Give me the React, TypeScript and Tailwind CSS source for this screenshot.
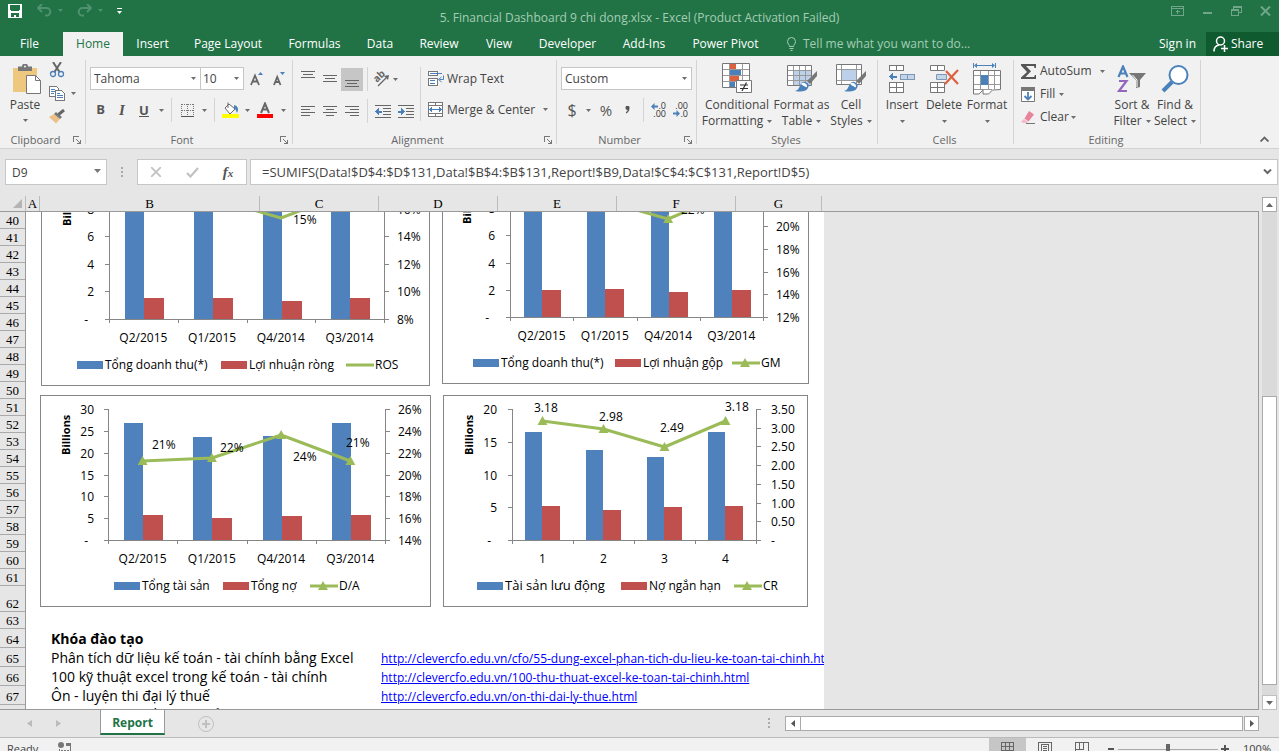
import type { ReactNode } from 'react';

/* ---------- shared bits ---------- */

function Caret({ className = '' }: { className?: string }) {
  return (
    <svg width="5" height="3" viewBox="0 0 5 3" className={`shrink-0 ${className}`} aria-hidden="true">
      <path d="M0 0h5L2.5 3z" fill="#6d6d6d" />
    </svg>
  );
}

function Sep({ className = '' }: { className?: string }) {
  return <span className={`h-6 w-px shrink-0 bg-[#d4d4d4] ${className}`} />;
}

function IconButton({ label, className = 'w-[22px]', children }: { label: string; className?: string; children: ReactNode }) {
  return (
    <button type="button" aria-label={label} className={`flex h-[23px] shrink-0 items-center justify-center ${className}`}>
      {children}
    </button>
  );
}

function Launcher({ label }: { label: string }) {
  return (
    <button type="button" aria-label={label} className="flex size-3 items-center justify-center">
      <svg width="8" height="8" viewBox="0 0 8 8" fill="none" stroke="#777" shapeRendering="crispEdges">
        <path d="M.5 6V.5H6" />
        <path d="M3 3l4 4" shapeRendering="auto" />
        <path d="M7.5 4v3.500H4" />
        <path d="M5 7h3V4z" fill="#777" stroke="none" />
      </svg>
    </button>
  );
}

function Group({ title, className, launcher, children }: { title: string; className: string; launcher?: boolean; children: ReactNode }) {
  return (
    <section aria-label={title} className={`flex shrink-0 pt-1 ${className}`}>
      <div className="flex min-w-0 flex-1 flex-col">
        <div className="flex-1">{children}</div>
        <div className="flex h-4 items-center pr-0.5 text-[11px] leading-4 text-[#666]">
          <span className="flex-1 text-center">{title}</span>
          {launcher && <Launcher label={`${title} settings`} />}
        </div>
      </div>
      <span className="mb-1 w-px bg-[#d4d4d4]" />
    </section>
  );
}

function BigButton({ lines, icon, className = '' }: { lines: [string, string]; icon: ReactNode; className?: string }) {
  return (
    <button type="button" className={`flex shrink-0 flex-col items-center text-[12px] leading-4 text-[#444] ${className}`}>
      <span className="flex h-[37px] items-center">{icon}</span>
      <span className="whitespace-nowrap">{lines[0]}</span>
      <span className="flex h-4 items-center gap-1 whitespace-nowrap">
        {lines[1]}
        <Caret />
      </span>
    </button>
  );
}

/* ---------- title bar and tabs ---------- */

function TitleBar() {
  return (
    <header className="flex h-8 shrink-0 items-center bg-[#217346] text-[#a5cdb4]">
      <div className="flex h-8 flex-1 items-start pl-2">
        <button type="button" aria-label="Save" className="mt-1">
          <svg width="14" height="14" viewBox="0 0 14 14" shapeRendering="crispEdges">
            <path d="M0 0h14v14H0z" fill="#fff" />
            <path d="M2 1h10v6H2zM3 9h8v4H8v-2H6v2H3z" fill="#217346" />
            <path d="M2 6h1v1H2zM11 6h1v1h-1z" fill="#fff" />
          </svg>
        </button>
        <button type="button" aria-label="Undo" className="mt-1 ml-[15px] flex items-center gap-1.5">
          <svg width="15" height="13" viewBox="0 0 15 13" fill="none" stroke="#4f9270" strokeWidth="2">
            <path d="M5 0L1 4l4 4M1 4h8.500a3.800 3.800 0 0 1 0 7.600H8" />
          </svg>
          <svg width="5" height="3"><path d="M0 0h5L2.500 3z" fill="#4f9270" /></svg>
        </button>
        <button type="button" aria-label="Redo" className="mt-1 ml-[14px] flex items-center gap-1.5">
          <svg width="15" height="13" viewBox="0 0 15 13" fill="none" stroke="#4f9270" strokeWidth="2">
            <path d="M10 0l4 4-4 4M14 4H5.500a3.800 3.800 0 0 0 0 7.600H7" />
          </svg>
          <svg width="5" height="3"><path d="M0 0h5L2.500 3z" fill="#4f9270" /></svg>
        </button>
        <button type="button" aria-label="Customize toolbar" className="mt-2 ml-[14px]">
          <svg width="5" height="6" viewBox="0 0 5 6"><path d="M0 0h5v1H0zM0 3h5L2.500 6z" fill="#fff" /></svg>
        </button>
      </div>
      <h1 className="pt-1 text-[12px] leading-4 whitespace-nowrap">5. Financial Dashboard 9 chi dong.xlsx - Excel (Product Activation Failed)</h1>
      <div className="flex flex-1 items-start justify-end gap-[18px] pr-2 pb-[9px]">
        <button type="button" aria-label="Ribbon display options">
          <svg width="13" height="11" viewBox="0 0 13 11" fill="none" stroke="#6fa788" shapeRendering="crispEdges">
            <path d="M.5.500h12v9H.5zM1 2.500h11M6.500 8V4M4.500 5.500h4" />
          </svg>
        </button>
        <button type="button" aria-label="Minimize" className="pt-1.5">
          <svg width="11" height="2"><path d="M1 0h9v2H1z" fill="#6fa788" /></svg>
        </button>
        <button type="button" aria-label="Restore">
          <svg width="11" height="10" viewBox="0 0 11 10" fill="none" stroke="#6fa788" shapeRendering="crispEdges">
            <path d="M.5 3.500h7v6h-7zM.5 4.500h7M2.500 3V.5h8v6H8M3 1.500h7" />
          </svg>
        </button>
        <button type="button" aria-label="Close">
          <svg width="11" height="10" viewBox="0 0 11 10" fill="none" stroke="#6fa788" strokeWidth="2">
            <path d="M1 .5l9 9M10 .5l-9 9" />
          </svg>
        </button>
      </div>
    </header>
  );
}

const tabs = [
  { name: 'Home', width: 'w-[60px]' },
  { name: 'Insert', width: 'w-[59px]' },
  { name: 'Page Layout', width: 'w-[92px]' },
  { name: 'Formulas', width: 'w-[81px]' },
  { name: 'Data', width: 'w-[50px]' },
  { name: 'Review', width: 'w-[68px]' },
  { name: 'View', width: 'w-[52px]' },
  { name: 'Developer', width: 'w-[85px]' },
  { name: 'Add-Ins', width: 'w-[68px]' },
  { name: 'Power Pivot', width: 'w-[95px]' },
];

function TabBar() {
  return (
    <nav className="flex h-6 shrink-0 bg-[#217346] text-[12px] leading-6 text-white">
      <button type="button" className="w-[63px] shrink-0 pr-1">File</button>
      {tabs.map((t) => (
        <button
          key={t.name}
          type="button"
          className={`shrink-0 whitespace-nowrap ${t.width} ${t.name === 'Home' ? 'bg-[#f1f1f1] text-[#217346]' : ''}`}
        >
          {t.name}
        </button>
      ))}
      <button type="button" className="ml-[13px] flex items-center gap-1.5 text-[#a5cdb4]">
        <svg width="11" height="14" viewBox="0 0 11 14" fill="none" stroke="#a5cdb4">
          <path d="M3.500 9.500c0-2-2-2.500-2-5a4 4 0 0 1 8 0c0 2.500-2 3-2 5zM3.500 11.500h4M4.500 13.500h2" />
        </svg>
        Tell me what you want to do...
      </button>
      <div className="flex flex-1 justify-end">
        <button type="button" className="px-2.5">Sign in</button>
        <button type="button" className="flex w-[73px] items-center gap-0.5 bg-[#0f5a2f] pl-[7px]">
          <svg width="16" height="17" viewBox="0 0 16 17" fill="none" stroke="#fff" strokeWidth="1.500">
            <circle cx="7.500" cy="5" r="4" />
            <path d="M1 15.500c0-4 2-6 5-6.500M8 12.500h7M11.500 9v7" />
          </svg>
          Share
        </button>
      </div>
    </nav>
  );
}

/* ---------- ribbon ---------- */

function Clipboard() {
  return (
    <Group title="Clipboard" className="w-[86px]" launcher>
      <div className="flex pl-1.5">
        <button type="button" className="flex w-[38px] flex-col items-center text-[12px] leading-4 text-[#444]">
          <svg width="29" height="32" viewBox="0 0 29 32" className="mt-1 ml-1">
            <path d="M0 4h24v24H0z" fill="#edc87e" />
            <path d="M5 7V2.500h4A3 3 0 0 1 15 2.500h4V7z" fill="#777" />
            <circle cx="12" cy="2.500" r="1" fill="#f1f1f1" />
            <path d="M13.500 11.500h9l5 5v13h-14z" fill="#fff" stroke="#777" />
            <path d="M22.500 11.500v5h5" fill="none" stroke="#777" />
          </svg>
          <span className="mt-px">Paste</span>
          <Caret className="mt-1.5" />
        </button>
        <div className="flex flex-col items-start gap-2 pt-0.5 pl-[5px]">
          <button type="button" aria-label="Cut">
            <svg width="16" height="16" viewBox="0 0 16 16" fill="none">
              <path d="M4 0l6.500 10M12 0L5.500 10" stroke="#666" strokeWidth="2" />
              <circle cx="4" cy="12" r="2.500" stroke="#4b81ba" strokeWidth="1.300" />
              <circle cx="12" cy="12" r="2.500" stroke="#4b81ba" strokeWidth="1.300" />
            </svg>
          </button>
          <button type="button" aria-label="Copy" className="flex items-center gap-1.5">
            <svg width="16" height="15" viewBox="0 0 16 15" shapeRendering="crispEdges">
              <path d="M.5.500h7l2 2v8h-9z" fill="#fff" stroke="#777" />
              <path d="M2 3.500h4M2 5.500h4M2 7.500h3" stroke="#4b81ba" />
              <path d="M6.500 4.500h6l3 3v7h-9z" fill="#fff" stroke="#777" />
              <path d="M8 7.500h3M8 9.500h6M8 11.500h6" stroke="#4b81ba" />
            </svg>
            <Caret />
          </button>
          <button type="button" aria-label="Format Painter">
            <svg width="16" height="15" viewBox="0 0 16 15">
              <path d="M0 8l5-3 6 5-4 4.500z" fill="#edc087" />
              <path d="M5 5l2-2 6 5-2 2z" fill="#777" />
              <path d="M9.500 5.500L15 1" stroke="#666" strokeWidth="3" />
            </svg>
          </button>
        </div>
      </div>
    </Group>
  );
}

function FontGroup() {
  return (
    <Group title="Font" className="w-[207px]" launcher>
      <div className="flex flex-col gap-2 pt-[7px] pl-1">
        <div className="flex items-center text-[12px] text-[#444]">
          <DropDown label="Font name" value="Tahoma" className="w-[111px]" />
          <DropDown label="Font size" value="10" className="-ml-px w-[44px]" tight />
          <IconButton label="Increase font size" className="ml-0.5 w-[22px]">
            <svg width="14" height="14" viewBox="0 0 14 14" fill="none">
              <path d="M1 13L5 3.500 9 13M2.500 9.500h5" stroke="#666" strokeWidth="1.800" />
              <path d="M8 3h5L10.500 0z" fill="#4b81ba" />
            </svg>
          </IconButton>
          <IconButton label="Decrease font size">
            <svg width="13" height="14" viewBox="0 0 13 14" fill="none">
              <path d="M1 13l3.200-8L7.500 13M2.200 10h4" stroke="#666" strokeWidth="1.800" />
              <path d="M7 0h5L9.500 3z" fill="#4b81ba" />
            </svg>
          </IconButton>
        </div>
        <div className="flex items-center text-[#555]">
          <IconButton label="Bold" className="w-[21px] text-[13px] font-bold">B</IconButton>
          <IconButton label="Italic"><span className="font-['Liberation_Serif',serif] text-[15px] font-bold italic">I</span></IconButton>
          <IconButton label="Underline"><span className="border-b border-[#555] text-[13px] leading-3 font-bold">U</span></IconButton>
          <IconButton label="Underline style" className="w-3"><Caret /></IconButton>
          <Sep className="mr-0.5 ml-1" />
          <IconButton label="Borders" className="w-[26px]">
            <svg width="13" height="13" viewBox="0 0 13 13" fill="none" stroke="#777" shapeRendering="crispEdges">
              <path d="M.5.500h12M.5 6.500h12M.5 0v12M6.500 0v12M12.500 0v12" strokeDasharray="1 1" />
              <path d="M0 12.500h13" stroke="#555" />
            </svg>
          </IconButton>
          <IconButton label="Border style" className="w-2"><Caret /></IconButton>
          <Sep className="mr-0.5 ml-1.5" />
          <IconButton label="Fill color" className="w-[26px]">
            <svg width="17" height="16" viewBox="0 0 17 16" fill="none">
              <path d="M3 6l4-4 6 5-5 5z" fill="#fff" stroke="#666" />
              <path d="M6 6V.5" stroke="#666" />
              <path d="M12 3c4 1 5 4 3 8-1-2-1-4-3-5z" fill="#4b81ba" />
              <path d="M0 12h17v4H0z" fill="#ff0" />
            </svg>
          </IconButton>
          <IconButton label="Fill color list" className="w-2"><Caret /></IconButton>
          <IconButton label="Font color" className="w-7">
            <svg width="16" height="16" viewBox="0 0 16 16" fill="none">
              <path d="M4 11L8 1.500 12 11M5.500 7.500h5" stroke="#666" strokeWidth="2" />
              <path d="M0 12h16v4H0z" fill="#f00" />
            </svg>
          </IconButton>
          <IconButton label="Font color list" className="w-2"><Caret /></IconButton>
        </div>
      </div>
    </Group>
  );
}

function DropDown({ label, value, className, tight }: { label: string; value: string; className: string; tight?: boolean }) {
  return (
    <span className={`relative flex h-[23px] shrink-0 ${className}`}>
      <select
        aria-label={label}
        defaultValue={value}
        className={`w-full appearance-none border border-[#c6c6c6] bg-white text-[12px] leading-4 text-[#444] ${tight ? 'pl-0.5' : 'pl-[3px]'}`}
      >
        <option>{value}</option>
      </select>
      <Caret className="pointer-events-none absolute top-2.5 right-[5px]" />
    </span>
  );
}

function Lines({ d, width = 14, height = 13 }: { d: string; width?: number; height?: number }) {
  return (
    <svg width={width} height={height} viewBox={`0 0 ${width} ${height}`} fill="none" stroke="#666" shapeRendering="crispEdges">
      <path d={d} />
    </svg>
  );
}

function Alignment() {
  return (
    <Group title="Alignment" className="w-[264px]" launcher>
      <div className="flex pt-[7px] pl-1 text-[12px] leading-4 text-[#444]">
        <div className="flex flex-col gap-2">
          <div className="flex items-center">
            <IconButton label="Top align"><Lines height={17} d="M0 .5h14M2 3.500h10M0 6.500h14" /></IconButton>
            <IconButton label="Middle align"><Lines d="M0 2.500h14M2 5.500h10M0 8.500h14" /></IconButton>
            <IconButton label="Bottom align" className="w-[22px] bg-[#c6c6c6]"><Lines height={15} d="M0 8.500h14M2 11.500h10M0 14.500h14" /></IconButton>
            <Sep className="ml-1" />
            <IconButton label="Orientation" className="w-[34px] gap-1">
              <svg width="17" height="16" viewBox="0 0 17 16" fill="none" overflow="visible">
                <text fontSize="10" fontWeight="700" fill="#666" transform="translate(5 12) rotate(-45)">ab</text>
                <path d="M6 15L14 7" stroke="#666" strokeWidth="1.200" />
                <path d="M17 4l-1 5-4-4z" fill="#666" />
              </svg>
              <Caret />
            </IconButton>
          </div>
          <div className="flex items-center">
            <IconButton label="Align left"><Lines height={11} d="M0 .5h14M0 3.500h9M0 6.500h14M0 9.500h9" /></IconButton>
            <IconButton label="Center"><Lines height={11} d="M0 .5h14M3 3.500h8M0 6.500h14M3 9.500h8" /></IconButton>
            <IconButton label="Align right"><Lines height={11} d="M0 .5h14M5 3.500h9M0 6.500h14M5 9.500h9" /></IconButton>
            <Sep className="ml-1" />
            <IconButton label="Decrease indent" className="w-[30px]">
              <svg width="16" height="13" viewBox="0 0 16 13" fill="none" shapeRendering="crispEdges">
                <path d="M0 .5h16M8 3.500h8M8 6.500h8M8 9.500h8M0 12.500h16" stroke="#666" />
                <path d="M0 6.500L4 3v2.500h3v2H4V10z" fill="#4b81ba" />
              </svg>
            </IconButton>
            <IconButton label="Increase indent" className="w-4">
              <svg width="16" height="13" viewBox="0 0 16 13" fill="none" shapeRendering="crispEdges">
                <path d="M0 .5h16M8 3.500h8M8 6.500h8M8 9.500h8M0 12.500h16" stroke="#666" />
                <path d="M7 6.500L3 3v2.500H0v2h3V10z" fill="#4b81ba" />
              </svg>
            </IconButton>
          </div>
        </div>
        <span className="ml-1.5 h-[54px] w-px shrink-0 bg-[#d4d4d4]" />
        <div className="flex flex-col gap-2 pl-[7px]">
          <button type="button" className="flex h-[23px] items-center gap-[3px] whitespace-nowrap">
            <svg width="16" height="16" viewBox="0 0 16 16" fill="none" shapeRendering="crispEdges">
              <path d="M.5.500h9v4h-9zM.5 7.500h9v7h-9z" fill="#fff" stroke="#777" />
              <path d="M2 2.500h12M2 9.500h5M2 12.500h5" stroke="#4b81ba" />
              <path d="M15.500 4.500v4h-4M13.500 6l-3 2.500 3 2.500" stroke="#4b81ba" shapeRendering="auto" />
            </svg>
            Wrap Text
          </button>
          <button type="button" className="flex h-[23px] items-center gap-1 whitespace-nowrap">
            <svg width="15" height="15" viewBox="0 0 15 15" fill="none" shapeRendering="crispEdges">
              <path d="M.5.500h14v14H.5z" fill="#fff" stroke="#777" />
              <path d="M0 3.500h15M0 11.500h15M7.500 0v3M7.500 12v3" stroke="#777" />
              <path d="M2 7.500h11" stroke="#4b81ba" />
              <path d="M1 7.500L4 5v5zM14 7.500L11 5v5z" fill="#4b81ba" />
            </svg>
            Merge &amp; Center
            <Caret className="ml-1" />
          </button>
        </div>
      </div>
    </Group>
  );
}

function NumberGroup() {
  return (
    <Group title="Number" className="w-[140px]" launcher>
      <div className="flex flex-col gap-2 pt-[7px] pl-1">
        <DropDown label="Number format" value="Custom" className="w-[131px]" />
        <div className="flex items-center text-[16px] leading-5 text-[#555]">
          <IconButton label="Accounting format">$</IconButton>
          <IconButton label="Accounting format list" className="w-2.5"><Caret /></IconButton>
          <IconButton label="Percent style" className="w-[26px] text-[15px]">%</IconButton>
          <IconButton label="Comma style" className="w-4">
            <svg width="5" height="8" viewBox="0 0 5 8"><path d="M.5 1.500a2 2 0 0 1 4 .5c0 3-1.500 4.500-3.500 5.500V6C2 5.500 2.500 5 2.500 4 1 4 .5 3 .5 1.500z" fill="#555" /></svg>
          </IconButton>
          <Sep className="ml-2" />
          <IconButton label="Increase decimal" className="w-7">
            <svg width="15" height="16" viewBox="0 0 15 16" overflow="visible">
              <text x="15" y="7" fontSize="9" textAnchor="end" fill="#333">.0</text>
              <text x="15" y="15" fontSize="9" textAnchor="end" fill="#333">.00</text>
              <path d="M0 4.500L3.500 1v2.500H7v2H3.500V8z" fill="#4b81ba" />
            </svg>
          </IconButton>
          <IconButton label="Decrease decimal" className="w-4">
            <svg width="15" height="16" viewBox="0 0 15 16" overflow="visible">
              <text x="15" y="7" fontSize="9" textAnchor="end" fill="#333">.00</text>
              <text x="15" y="15" fontSize="9" textAnchor="end" fill="#333">.0</text>
              <path d="M7 11.500L3.500 8v2.500H0v2h3.500V15z" fill="#4b81ba" />
            </svg>
          </IconButton>
        </div>
      </div>
    </Group>
  );
}

function Brush() {
  return (
    <>
      <path d="M30 7L20 17l3 3 7-8z" fill="#777" />
      <path d="M8 27c4-1 4-4 6-7a4 4 0 0 1 7 4c-2 4-8 4-13 3z" fill="#4b81ba" />
      <path d="M14 20a3.500 3.500 0 0 1 6 3c-1 1-2-1-3-1s-1-1-3-2z" fill="#fff" />
    </>
  );
}

function Styles() {
  return (
    <Group title="Styles" className="w-[181px]">
      <div className="flex justify-between pr-[5px] pl-1">
        <BigButton
          lines={['Conditional', 'Formatting']}
          className="w-[72px]"
          icon={
            <svg width="30" height="31" viewBox="0 0 30 31">
              <path d="M.5.500h27v24H.5z" fill="#fff" stroke="#777" />
              <path d="M8 1h6v5H8zM8 13h9v5H8z" fill="#dc6141" />
              <path d="M8 7h11v5H8zM8 19h5v5H8z" fill="#4b81ba" />
              <path d="M1 6.500h26M1 12.500h26M1 18.500h26M7.500 1v23M20.500 1v23" stroke="#999" fill="none" />
              <path d="M14.500 17.500h15v12h-15z" fill="#fff" stroke="#777" />
              <path d="M18 22h8M18 25.500h8M24.500 19.500l-4.500 8.500" stroke="#333" strokeWidth="1.200" />
            </svg>
          }
        />
        <BigButton
          lines={['Format as', 'Table']}
          className="w-[56px]"
          icon={
            <svg width="30" height="29" viewBox="0 0 30 29">
              <path d="M.5 1.500h24v20H.5z" fill="#fff" stroke="#777" />
              <path d="M7 7h17v14H7z" fill="#bdd0ea" />
              <path d="M1 6.500h23M1 11.500h23M1 16.500h23M6.500 2v19M12.500 2v19M18.500 2v19" stroke="#999" fill="none" />
              <Brush />
            </svg>
          }
        />
        <BigButton
          lines={['Cell', 'Styles']}
          className="w-[42px]"
          icon={
            <svg width="30" height="29" viewBox="0 0 30 29">
              <path d="M.5.500h25v20H.5z" fill="#fff" stroke="#777" />
              <path d="M6 6h14v10H6z" fill="#bdd0ea" />
              <path d="M1 5.500h24M1 16.500h24M5.500 1v19M20.500 1v19" stroke="#999" fill="none" />
              <Brush />
            </svg>
          }
        />
      </div>
    </Group>
  );
}

function CellGrid({ y }: { y: number }) {
  return <path d={`M.5 ${y + 0.5}h14v${y ? 10 : 5}H.5zM7.500 ${y}v${y ? 10 : 5}${y ? 'M1 22.500h14' : ''}`} fill="#fff" stroke="#777" />;
}

function Cells() {
  return (
    <Group title="Cells" className="w-[136px]">
      <div className="flex pl-[3px]">
        <BigButton
          lines={['Insert', '']}
          className="w-[42px]"
          icon={
            <svg width="27" height="28" viewBox="0 0 27 28" shapeRendering="crispEdges">
              <CellGrid y={0} />
              <CellGrid y={17} />
              <path d="M11.500 9.500h14v5h-14zM18.500 9v6" fill="#c3d5e8" stroke="#7d97b5" />
              <path d="M0 11.500L4 8v2.500h4v2H4V15z" fill="#4b81ba" />
            </svg>
          }
        />
        <BigButton
          lines={['Delete', '']}
          className="w-[42px]"
          icon={
            <svg width="29" height="28" viewBox="0 0 29 28">
              <CellGrid y={0} />
              <CellGrid y={17} />
              <path d="M6.500 9.500h10v5h-10z" fill="#c3d5e8" stroke="#7d97b5" />
              <path d="M16 6l12 13M28 5L15 19" stroke="#dc6141" strokeWidth="2.200" />
            </svg>
          }
        />
        <BigButton
          lines={['Format', '']}
          className="w-[44px]"
          icon={
            <svg width="28" height="32" viewBox="0 0 28 32" fill="none">
              <path d="M.5 0v5M22.500 0v5M2 2.500h19" stroke="#4b81ba" />
              <path d="M1 2.500L4 0v5zM22 2.500L19 0v5z" fill="#4b81ba" />
              <path d="M.5 7.500h27v19l-8 .5-4 4H10v-4l-4 4H.5z" fill="#fff" stroke="#777" />
              <path d="M1 12.500h26M1 21.500h26M1 26.500h18M7.500 8v18M15.500 8v18M21.500 8v18" stroke="#999" />
              <path d="M8 12h7v10H8z" fill="#4b81ba" />
            </svg>
          }
        />
      </div>
    </Group>
  );
}

function Editing() {
  return (
    <Group title="Editing" className="w-[187px]">
      <div className="flex pl-[7px]">
        <div className="flex w-[84px] flex-col text-[12px] leading-4 text-[#444]">
          <button type="button" className="flex h-[22px] items-center">
            <svg width="16" height="15" viewBox="0 0 16 15" className="mr-[3px]">
              <path d="M0 0h15v4h-1.500L13 2H5l5 5.300L4.500 13H13l1-2h1v4H0v-1.500L6 8 0 1.500z" fill="#555" />
            </svg>
            <span className="flex-1 text-left">AutoSum</span>
            <Caret />
          </button>
          <button type="button" className="flex h-6 items-center gap-1">
            <svg width="14" height="15" viewBox="0 0 14 15" fill="none">
              <path d="M.5.500h13v14H.5z" fill="#fff" stroke="#777" />
              <path d="M0 0h14v4H0z" fill="#777" />
              <path d="M7 5v8M3.500 9L7 12.500 10.500 9" stroke="#4b81ba" strokeWidth="1.800" />
            </svg>
            <span className="ml-px">Fill</span>
            <Caret />
          </button>
          <button type="button" className="flex h-[22px] items-center gap-1">
            <svg width="14" height="13" viewBox="0 0 14 13">
              <path d="M8 0l5 3.500-5.500 7-4-3z" fill="#e9839b" />
              <path d="M3 8l4 3-1 1H2L0 10.500z" fill="#f4bcc8" />
              <path d="M5 12.500h9" stroke="#777" />
            </svg>
            <span className="ml-px">Clear</span>
            <Caret className="-ml-0.5" />
          </button>
        </div>
        <BigButton
          lines={['Sort &', 'Filter']}
          className="ml-1.5 w-[42px]"
          icon={
            <svg width="30" height="28" viewBox="0 0 30 28" fill="none">
              <path d="M1.500 12L6 1.500 10.500 12M3 8.500h6" stroke="#4b81ba" strokeWidth="2.200" />
              <path d="M2 16h7.500L2 26h8" stroke="#9467bd" strokeWidth="2.200" />
              <path d="M12 8h17l-6 7v7l-4 1v-8z" fill="#777" />
              <path d="M15.500 10l4.500 5v7" stroke="#fff" />
            </svg>
          }
        />
        <BigButton
          lines={['Find &', 'Select']}
          className="w-[44px]"
          icon={
            <svg width="28" height="28" viewBox="0 0 28 28" fill="none">
              <circle cx="17.500" cy="10" r="9" fill="#fff" stroke="#4b81ba" strokeWidth="2" />
              <path d="M11 17l-9 9" stroke="#4b81ba" strokeWidth="4" />
            </svg>
          }
        />
      </div>
    </Group>
  );
}

function Ribbon() {
  return (
    <div className="flex h-[93px] shrink-0 border-b border-[#d2d2d2] bg-[#f1f1f1]">
      <Clipboard />
      <FontGroup />
      <Alignment />
      <NumberGroup />
      <Styles />
      <Cells />
      <Editing />
      <div className="flex flex-1 items-end justify-end pr-2.5 pb-1.5">
        <button type="button" aria-label="Collapse ribbon">
          <svg width="9" height="6" viewBox="0 0 9 6" fill="none" stroke="#666" strokeWidth="1.800"><path d="M.5 5.500l4-4 4 4" /></svg>
        </button>
      </div>
    </div>
  );
}

/* ---------- formula bar ---------- */

function Dots() {
  return (
    <svg width="2" height="11" viewBox="0 0 2 11" className="shrink-0"><path d="M0 0h2v2H0zM0 4h2v2H0zM0 8h2v2H0z" fill="#aaa" /></svg>
  );
}

function FormulaBar() {
  return (
    <div className="flex h-[47px] shrink-0 items-start bg-[#e6e6e6] pt-2.5 pr-px pl-[5px]">
      <div className="relative flex h-[26px] w-[102px] shrink-0">
        <input aria-label="Name box" defaultValue="D9" className="w-full border border-[#c6c6c6] bg-white pt-0.5 pl-1.5 text-[12px] text-[#444]" />
        <svg width="7" height="4" className="absolute top-2.5 right-1.5"><path d="M0 0h7L3.500 4z" fill="#777" /></svg>
      </div>
      <div className="flex h-[26px] w-[30px] shrink-0 items-center justify-center"><Dots /></div>
      <div className="flex h-[26px] w-[110px] shrink-0 items-center border border-[#c6c6c6] bg-white">
        <button type="button" aria-label="Cancel" className="flex w-9 justify-center">
          <svg width="10" height="10" viewBox="0 0 10 10" fill="none" stroke="#c2c2c2" strokeWidth="1.800"><path d="M0 0l10 10M10 0L0 10" /></svg>
        </button>
        <button type="button" aria-label="Enter" className="flex w-9 justify-center">
          <svg width="13" height="11" viewBox="0 0 13 11" fill="none" stroke="#c2c2c2" strokeWidth="2.200"><path d="M1 6l3.500 3.500L12 1" /></svg>
        </button>
        <button type="button" aria-label="Insert function" className="w-9 font-['Liberation_Serif',serif] text-[15px] leading-4 font-bold text-[#555] italic">
          f<span className="text-[11px]">x</span>
        </button>
      </div>
      <div className="relative ml-[3px] flex h-[26px] min-w-0 flex-1">
        <input
          aria-label="Formula"
          defaultValue="=SUMIFS(Data!$D$4:$D$131,Data!$B$4:$B$131,Report!$B9,Data!$C$4:$C$131,Report!D$5)"
          className="w-full border border-[#c6c6c6] bg-white pt-0.5 pl-[11px] text-[13px] text-[#444]"
        />
        <svg width="9" height="6" viewBox="0 0 9 6" fill="none" stroke="#666" strokeWidth="2" className="absolute top-2.5 right-1.5"><path d="M1 .5l3.500 3.500L8 .5" /></svg>
      </div>
    </div>
  );
}

/* ---------- charts ---------- */

const BLUE = '#4f81bd';
const RED = '#c0504d';
const GREEN = '#9bbb59';

type Legend = { x: number; text: string; kind: 'blue' | 'red' | 'line' | 'marker'; size?: number };

type ChartProps = {
  label: string;
  width: number;
  height: number;
  left: number;
  right: number;
  top: number;
  base: number;
  leftTicks: string[];
  rightTicks: string[];
  leftLabelX: number;
  rightLabelX: number;
  titleX: number;
  titleY: number;
  categories: string[];
  barOffset: number;
  barWidth: number;
  blue: number[];
  red: number[];
  line: number[];
  markers?: boolean;
  labels: { x: number; y: number; text: string }[];
  categoryY: number;
  legendY: number;
  legend: Legend[];
};

function Marker({ x, y }: { x: number; y: number }) {
  return <path d={`M${x - 5} ${y + 4}L${x} ${y - 5}L${x + 5} ${y + 4}Z`} fill={GREEN} />;
}

function Chart(p: ChartProps) {
  const step = (p.right - p.left) / p.categories.length;
  const ly = (i: number) => p.base - ((p.base - p.top) * i) / (p.leftTicks.length - 1);
  const ry = (i: number) => p.base - ((p.base - p.top) * i) / (p.rightTicks.length - 1);
  const cx = (i: number) => p.left + step * (i + 0.5);
  return (
    <svg
      role="img"
      aria-label={p.label}
      width={p.width}
      height={p.height}
      viewBox={`0 0 ${p.width} ${p.height}`}
      className="shrink-0 bg-white"
      fontSize="12"
      fill="#000"
    >
      <rect x=".5" y=".5" width={p.width - 1} height={p.height - 1} fill="none" stroke="#868686" />
      <text x={p.titleX} y={p.titleY} fontSize="11" fontWeight="700" transform={`rotate(-90 ${p.titleX} ${p.titleY})`}>Billions</text>
      {p.categories.map((c, i) => (
        <g key={c}>
          <rect x={Math.round(p.left + step * i + p.barOffset)} y={p.base - p.blue[i]} width={p.barWidth} height={p.blue[i]} fill={BLUE} />
          <rect x={Math.round(p.left + step * i + p.barOffset) + p.barWidth} y={p.base - p.red[i]} width={p.barWidth + 1} height={p.red[i]} fill={RED} />
          <text x={cx(i)} y={p.categoryY} textAnchor="middle">{c}</text>
        </g>
      ))}
      <g fill="none" stroke="#868686" shapeRendering="crispEdges">
        <path d={`M${p.left + 0.5} ${p.top}V${p.base}M${p.left - 4} ${p.base + 0.5}H${p.right + 5}M${p.right + 0.5} ${p.top}V${p.base}`} />
        {p.leftTicks.map((_, i) => <path key={i} d={`M${p.left - 4} ${Math.round(ly(i)) + 0.5}h4`} />)}
        {p.rightTicks.map((_, i) => <path key={i} d={`M${p.right + 1} ${Math.round(ry(i)) + 0.5}h4`} />)}
        {[0, 1, 2, 3, 4].map((i) => <path key={i} d={`M${Math.round(p.left + step * i) + 0.5} ${p.base}v4`} />)}
      </g>
      {p.leftTicks.map((t, i) => <text key={i} x={t === '-' ? p.leftLabelX - 6 : p.leftLabelX} y={ly(i) + 5} textAnchor="end">{t}</text>)}
      {p.rightTicks.map((t, i) => <text key={i} x={p.rightLabelX} y={ry(i) + 5}>{t}</text>)}
      <path d={`M${p.line.map((y, i) => `${cx(i)} ${y}`).join('L')}`} fill="none" stroke={GREEN} strokeWidth="3" strokeLinejoin="round" />
      {p.markers && p.line.map((y, i) => <Marker key={i} x={cx(i)} y={y} />)}
      {p.labels.map((l, i) => <text key={i} x={l.x} y={l.y}>{l.text}</text>)}
      {p.legend.map((l) => (
        <g key={l.text}>
          {(l.kind === 'blue' || l.kind === 'red') && <rect x={l.x} y={p.legendY - 4} width="26" height="8" fill={l.kind === 'blue' ? BLUE : RED} />}
          {(l.kind === 'line' || l.kind === 'marker') && <path d={`M${l.x} ${p.legendY}h28`} stroke={GREEN} strokeWidth="3" />}
          {l.kind === 'marker' && <Marker x={l.x + 13} y={p.legendY} />}
          <text x={l.x + (l.kind === 'blue' || l.kind === 'red' ? 28 : 29)} y={p.legendY + 4} fontSize={l.size ?? 12}>{l.text}</text>
        </g>
      ))}
    </svg>
  );
}

const quarters = ['Q2/2015', 'Q1/2015', 'Q4/2014', 'Q3/2014'];

function Charts() {
  return (
    <div className="flex flex-col gap-[9px] pl-3.5">
      <div className="-mt-[38px] flex items-start gap-3 pl-px">
        <Chart
          label="Revenue, net profit and ROS" width={389} height={212}
          left={68} right={343} top={7} base={145}
          leftTicks={['-', '2', '4', '6', '8', '10']} rightTicks={['8%', '10%', '12%', '14%', '16%', '18%']}
          leftLabelX={53} rightLabelX={356} titleX={30} titleY={52}
          categories={quarters} barOffset={16} barWidth={19}
          blue={[134, 132, 130, 136]} red={[21, 21, 18, 21]} line={[21, 24, 44, 18]}
          labels={[{ x: 252, y: 50, text: '15%' }]} categoryY={168} legendY={191}
          legend={[{ x: 36, text: 'Tổng doanh thu(*)', kind: 'blue' }, { x: 180, text: 'Lợi nhuận ròng', kind: 'red' }, { x: 305, text: 'ROS', kind: 'line' }]}
        />
        <Chart
          label="Revenue, gross profit and GM" width={367} height={210}
          left={68} right={321} top={7} base={143}
          leftTicks={['-', '2', '4', '6', '8', '10']} rightTicks={['12%', '14%', '16%', '18%', '20%', '22%', '24%']}
          leftLabelX={53} rightLabelX={334} titleX={29} titleY={50}
          categories={quarters} barOffset={14} barWidth={18}
          blue={[134, 132, 130, 136]} red={[27, 28, 25, 27]} line={[24, 27, 45, 18]} markers
          labels={[{ x: 239, y: 40, text: '22%' }]} categoryY={166} legendY={189}
          legend={[{ x: 31, text: 'Tổng doanh thu(*)', kind: 'blue' }, { x: 173, text: 'Lợi nhuận gộp', kind: 'red' }, { x: 290, text: 'GM', kind: 'marker' }]}
        />
      </div>
      <div className="flex items-start gap-3">
        <Chart
          label="Assets, debt and D/A" width={391} height={212}
          left={68} right={345} top={14} base={145}
          leftTicks={['-', '5', '10', '15', '20', '25', '30']} rightTicks={['14%', '16%', '18%', '20%', '22%', '24%', '26%']}
          leftLabelX={54} rightLabelX={358} titleX={30} titleY={60}
          categories={quarters} barOffset={16} barWidth={19}
          blue={[117, 103, 104, 117]} red={[25, 22, 24, 25]} line={[66, 63, 40, 66]} markers
          labels={[{ x: 112, y: 54, text: '21%' }, { x: 180, y: 57, text: '22%' }, { x: 253, y: 66, text: '24%' }, { x: 306, y: 52, text: '21%' }]}
          categoryY={168} legendY={191}
          legend={[{ x: 74, text: 'Tổng tài sản', kind: 'blue' }, { x: 183, text: 'Tổng nợ', kind: 'red' }, { x: 270, text: 'D/A', kind: 'marker' }]}
        />
        <Chart
          label="Current assets, short-term debt and CR" width={365} height={212}
          left={69} right={313} top={14} base={145}
          leftTicks={['-', '5', '10', '15', '20']} rightTicks={['-', '0.50', '1.00', '1.50', '2.00', '2.50', '3.00', '3.50']}
          leftLabelX={54} rightLabelX={328} titleX={30} titleY={60}
          categories={['1', '2', '3', '4']} barOffset={13} barWidth={17}
          blue={[108, 90, 83, 108]} red={[34, 30, 33, 34]} line={[26, 34, 52, 26]} markers
          labels={[{ x: 91, y: 17, text: '3.18' }, { x: 156, y: 26, text: '2.98' }, { x: 217, y: 37, text: '2.49' }, { x: 282, y: 16, text: '3.18' }]}
          categoryY={168} legendY={191}
          legend={[{ x: 34, text: 'Tài sản lưu động', kind: 'blue', size: 13 }, { x: 178, text: 'Nợ ngắn hạn', kind: 'red' }, { x: 291, text: 'CR', kind: 'marker' }]}
        />
      </div>
    </div>
  );
}

/* ---------- sheet ---------- */

const columns = [
  { name: 'A', width: 'w-[14px]' },
  { name: 'B', width: 'w-[220px]' },
  { name: 'C', width: 'w-[119px]' },
  { name: 'D', width: 'w-[119px]' },
  { name: 'E', width: 'w-[119px]' },
  { name: 'F', width: 'w-[119px]' },
  { name: 'G', width: 'w-[86px]' },
];

const rowHeight = (n: number) => (n === 62 ? 'h-[26px]' : n >= 64 ? 'h-[19px]' : 'h-[17px]');
const rowNumbers = Array.from({ length: 29 }, (_, i) => 40 + i);

const courses = [
  { name: 'Phân tích dữ liệu kế toán - tài chính bằng Excel', link: 'http://clevercfo.edu.vn/cfo/55-dung-excel-phan-tich-du-lieu-ke-toan-tai-chinh.html' },
  { name: '100 kỹ thuật excel trong kế toán - tài chính', link: 'http://clevercfo.edu.vn/100-thu-thuat-excel-ke-toan-tai-chinh.html' },
  { name: 'Ôn - luyện thi đại lý thuế', link: 'http://clevercfo.edu.vn/on-thi-dai-ly-thue.html' },
  { name: 'Khóa đào tạo kế toán trưởng cho thực hành', link: '' },
];

function Sheet() {
  return (
    <div className="flex min-w-0 flex-1 flex-col overflow-hidden border-b border-[#999]">
      <div className="flex h-4 shrink-0 border-b border-[#999] bg-[#e6e6e6] font-['Liberation_Serif',serif] text-[13px] leading-4 text-black">
        <div className="flex w-[26px] shrink-0 items-end justify-end border-r border-[#bbb] pr-[3px] pb-[3px]">
          <svg width="9" height="9"><path d="M9 0v9H0z" fill="#b4b4b4" /></svg>
        </div>
        {columns.map((c) => (
          <div key={c.name} className={`flex shrink-0 justify-center border-r border-[#bbb] ${c.width}`}>{c.name}</div>
        ))}
      </div>
      <div className="flex min-h-0 flex-1 overflow-hidden border-r border-[#999]">
        <div className="flex w-[26px] shrink-0 flex-col border-r border-[#999] bg-[#e6e6e6] font-['Liberation_Serif',serif] text-[13px] leading-[14px] text-black">
          {rowNumbers.map((n) => (
            <div key={n} className={`flex shrink-0 items-end justify-center border-b border-[#aaa] ${rowHeight(n)}`}>{n}</div>
          ))}
        </div>
        <div className="w-[798px] shrink-0 overflow-hidden bg-white">
          <Charts />
          <div className="pt-[22px] pl-[25px] text-black">
            <h2 className="h-[19px] text-[14px] leading-[19px] font-bold">Khóa đào tạo</h2>
            {courses.map((c) => (
              <div key={c.name} className="flex h-[19px] items-center">
                <span className="w-[330px] shrink-0 text-[14px] leading-[19px] whitespace-nowrap">{c.name}</span>
                {c.link && <a href={c.link} className="flex-1 overflow-hidden pt-0.5 text-[12px] leading-5 whitespace-nowrap text-[#0000ff] underline">{c.link}</a>}
              </div>
            ))}
          </div>
        </div>
      </div>
    </div>
  );
}

function VerticalScroll() {
  return (
    <div className="flex w-5 shrink-0 flex-col items-end bg-[#e6e6e6] pr-0.5 pt-px">
      <button type="button" aria-label="Scroll up" className="flex size-[15px] shrink-0 items-center justify-center border border-[#aaa] bg-white">
        <svg width="7" height="4"><path d="M0 4h7L3.500 0z" fill="#666" /></svg>
      </button>
      <div className="flex w-[15px] flex-1 flex-col bg-[#dadada]">
        <div className="flex-[185]" />
        <div className="flex-[289] border border-[#aaa] bg-white" />
        <div className="flex-[10]" />
      </div>
      <button type="button" aria-label="Scroll down" className="flex size-[15px] shrink-0 items-center justify-center border border-[#c0c0c0] bg-white">
        <svg width="7" height="4"><path d="M0 0h7L3.500 4z" fill="#666" /></svg>
      </button>
    </div>
  );
}

function SheetTabs() {
  return (
    <div className="flex h-[27px] shrink-0 items-center bg-[#e6e6e6]">
      <button type="button" aria-label="Previous sheet" className="ml-[27px]"><svg width="5" height="7"><path d="M5 0v7L0 3.500z" fill="#bbb" /></svg></button>
      <button type="button" aria-label="Next sheet" className="ml-6"><svg width="5" height="7"><path d="M0 0v7l5-3.500z" fill="#bbb" /></svg></button>
      <button type="button" className="ml-[39px] h-[25px] w-[65px] self-start border-x border-b-2 border-x-[#999] border-b-[#217346] bg-white pt-0.5 text-[12px] leading-5 font-bold text-[#217346]">Report</button>
      <button type="button" aria-label="New sheet" className="ml-[33px]">
        <svg width="16" height="16" viewBox="0 0 16 16" fill="none" stroke="#c0c0c0"><circle cx="8" cy="8" r="7.500" /><path d="M8 4v8M4 8h8" strokeWidth="2" /></svg>
      </button>
      <div className="flex flex-1 justify-end pr-[15px]"><Dots /></div>
      <div className="mr-5 flex h-[15px] w-[474px] shrink-0">
        <button type="button" aria-label="Scroll left" className="flex w-4 items-center justify-center border border-[#aaa] bg-white"><svg width="4" height="7"><path d="M4 0v7L0 3.500z" fill="#555" /></svg></button>
        <div className="-ml-px flex-1 border border-[#aaa] bg-white" />
        <button type="button" aria-label="Scroll right" className="ml-px flex w-[15px] items-center justify-center border border-[#aaa] bg-white"><svg width="4" height="7"><path d="M0 0v7l4-3.500z" fill="#555" /></svg></button>
      </div>
    </div>
  );
}

function StatusBar() {
  return (
    <footer className="h-3.5 shrink-0 overflow-hidden border-t border-[#bbb] bg-[#f1f1f1] text-[11px] leading-[22px] text-[#444]">
      <div className="flex h-[22px] items-center">
        <span className="w-[58px] shrink-0 pl-[7px]">Ready</span>
        <svg width="13" height="14" viewBox="0 0 13 14" fill="none" stroke="#777" shapeRendering="crispEdges">
          <path d="M1.500 7v6.500h11V1.500H8" /><path d="M8 2.500h5M8 3.500h5" /><path d="M3 8.500h9M3 10.500h9" strokeDasharray="2 1" />
          <circle cx="3" cy="3" r="3" fill="#777" stroke="none" shapeRendering="auto" />
        </svg>
        <div className="flex-1" />
        <button type="button" aria-label="Normal view" className="flex h-[22px] w-[37px] items-center justify-center bg-[#c6c6c6]">
          <svg width="13" height="14" viewBox="0 0 13 14" fill="none" stroke="#666" shapeRendering="crispEdges"><path d="M.5.500h12v12H.5zM0 4.500h13M0 8.500h13M4.500 0v13M8.500 0v13" /></svg>
        </button>
        <button type="button" aria-label="Page layout view" className="flex h-[22px] w-[37px] items-center justify-center">
          <svg width="14" height="14" viewBox="0 0 14 14" fill="none" stroke="#666" shapeRendering="crispEdges"><path d="M.5.500h13v13H.5zM3.500 2.500h7v11h-7zM5 4.500h4M5 6.500h4M5 8.500h4" /></svg>
        </button>
        <button type="button" aria-label="Page break view" className="flex h-[22px] w-[37px] items-center justify-center">
          <svg width="14" height="14" viewBox="0 0 14 14" fill="none" stroke="#666" shapeRendering="crispEdges"><path d="M.5.500h13v13H.5zM.5 7.500h8M4.500 0v7M8.500 0v7" /></svg>
        </button>
        <button type="button" aria-label="Zoom out" className="ml-2"><svg width="6" height="2"><path d="M0 0h6v2H0z" fill="#555" /></svg></button>
        <div className="mr-[3px] ml-1 flex h-[10px] w-[100px] items-center justify-center bg-[linear-gradient(#aaa,#aaa)] bg-[length:100%_1px] bg-center bg-no-repeat">
          <span className="h-[10px] w-1 bg-[#666]" />
        </div>
        <button type="button" aria-label="Zoom in"><svg width="8" height="8"><path d="M3 0h2v8H3zM0 3h8v2H0z" fill="#555" /></svg></button>
        <span className="ml-3.5 pr-2">100%</span>
      </div>
    </footer>
  );
}

export default function App() {
  return (
    <div className="flex h-screen min-w-0 flex-col overflow-hidden bg-[#e6e6e6] font-['Open_Sans','Noto_Sans',sans-serif]">
      <TitleBar />
      <TabBar />
      <Ribbon />
      <FormulaBar />
      <main className="flex min-h-0 flex-1">
        <Sheet />
        <VerticalScroll />
      </main>
      <SheetTabs />
      <StatusBar />
    </div>
  );
}
